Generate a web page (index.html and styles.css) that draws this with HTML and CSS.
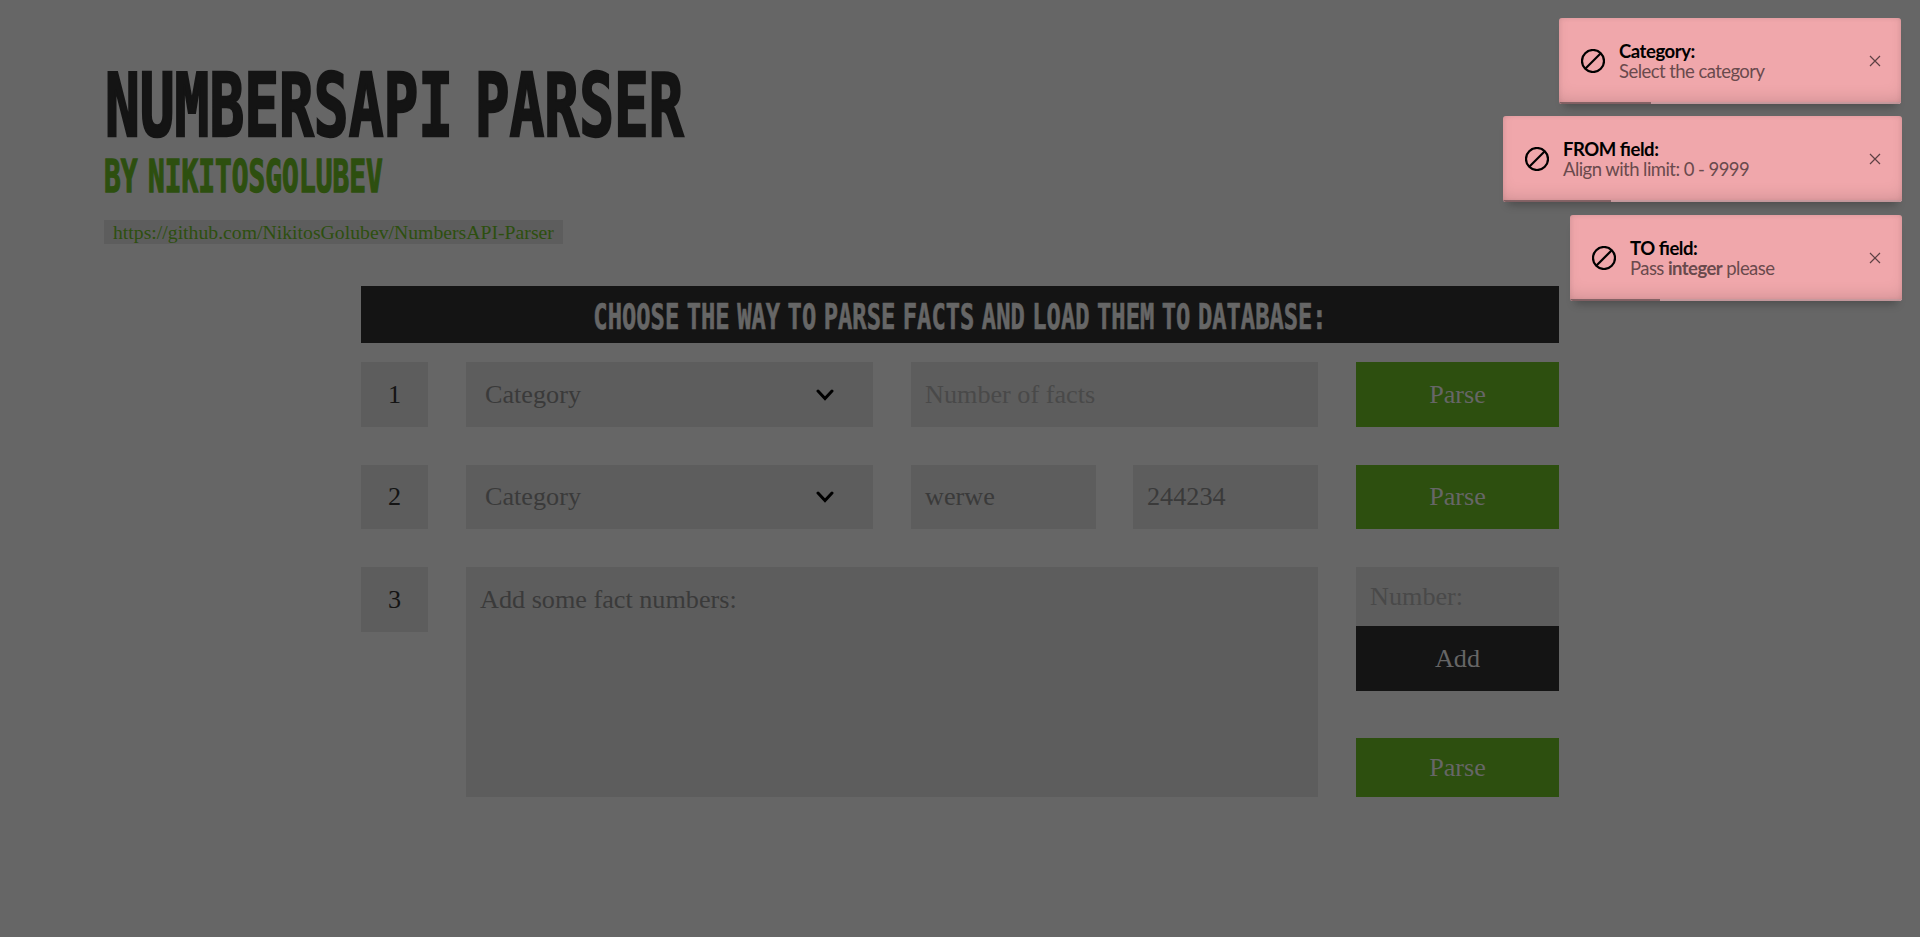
FILE: index.html
```html
<!DOCTYPE html>
<html lang="en">
<head>
<meta charset="utf-8">
<title>NumbersAPI Parser</title>
<link rel="stylesheet" href="styles.css">
</head>
<body>
<header class="intro">
  <h1 class="title"><span>NUMBERSAPI PARSER</span></h1>
  <h2 class="author"><span>BY NIKITOSGOLUBEV</span></h2>
  <a class="repo">https://github.com/NikitosGolubev/NumbersAPI-Parser</a>
</header>
<main class="panel">
  <div class="heading"><span>CHOOSE THE WAY TO PARSE FACTS AND LOAD THEM TO DATABASE:</span></div>
  <section class="row row-first">
    <div class="box num">1</div>
    <div class="box select">Category<svg class="chevron" viewBox="0 0 18 12"><path d="M2 2l7 7.5L16 2"/></svg></div>
    <div class="box field hint">Number of facts</div>
    <div class="box btn">Parse</div>
  </section>
  <section class="row row-second">
    <div class="box num">2</div>
    <div class="box select">Category<svg class="chevron" viewBox="0 0 18 12"><path d="M2 2l7 7.5L16 2"/></svg></div>
    <div class="range"><div class="box field">werwe</div><div class="box field">244234</div></div>
    <div class="box btn">Parse</div>
  </section>
  <section class="row row-third">
    <div class="box num">3</div>
    <div class="box area">Add some fact numbers:</div>
    <div class="side">
      <div class="box field hint">Number:</div>
      <div class="box btn add">Add</div>
      <div class="box btn last">Parse</div>
    </div>
  </section>
</main>
<aside class="toasts">
  <div class="toast toast-category">
    <svg class="ban" viewBox="0 0 24 24"><circle cx="12" cy="12" r="11"/><path d="M4.5 19.5l15-15"/></svg>
    <div class="msg"><strong class="head">Category:</strong><p>Select the category</p></div>
    <svg class="close" viewBox="0 0 12 12"><path d="M1 1l10 10M11 1L1 11"/></svg>
    <div class="progress"><i style="width:27%"></i></div>
  </div>
  <div class="toast toast-from">
    <svg class="ban" viewBox="0 0 24 24"><circle cx="12" cy="12" r="11"/><path d="M4.5 19.5l15-15"/></svg>
    <div class="msg"><strong class="head">FROM field:</strong><p>Align with limit: 0 - 9999</p></div>
    <svg class="close" viewBox="0 0 12 12"><path d="M1 1l10 10M11 1L1 11"/></svg>
    <div class="progress"><i style="width:27%"></i></div>
  </div>
  <div class="toast toast-to">
    <svg class="ban" viewBox="0 0 24 24"><circle cx="12" cy="12" r="11"/><path d="M4.5 19.5l15-15"/></svg>
    <div class="msg"><strong class="head">TO field:</strong><p>Pass <b>integer</b> please</p></div>
    <svg class="close" viewBox="0 0 12 12"><path d="M1 1l10 10M11 1L1 11"/></svg>
    <div class="progress"><i style="width:27%"></i></div>
  </div>
</aside>
</body>
</html>
```
FILE: styles.css
```css
* { box-sizing: border-box; margin: 0; padding: 0; }
body {
  height: 937px;
  overflow: hidden;
  background: #666;
  color: #3a3a3a;
  font: 26.2px/1.15 "Liberation Serif", serif;
}
.intro { padding: 61px 0 0 104px; height: 286px; }
.title, .author, .heading {
  font-family: "DejaVu Sans Mono", monospace;
  font-weight: bold;
  white-space: nowrap;
}
.title span, .author span, .heading span { display: inline-block; }
.title { height: 92px; padding-left: 1px; font-size: 88px; line-height: 89px; color: #141414; }
.title span {
  transform: scaleX(.657);
  transform-origin: 0 50%;
  word-spacing: -20px;
  -webkit-text-stroke: 2.5px #141414;
}
.author { height: 67px; font-size: 44px; line-height: 48px; color: #2d4f0f; }
.author span {
  transform: scaleX(.633);
  transform-origin: 0 50%;
  word-spacing: -10px;
  -webkit-text-stroke: 1.4px #2d4f0f;
}
.repo {
  display: inline-block;
  height: 24px;
  padding: 0 9px;
  background: #5d5d5d;
  color: #2d4f0f;
  font-size: 19.73px;
  line-height: 24px;
  vertical-align: top;
}
.panel { width: 1198px; margin-left: 361px; }
.heading {
  display: flex;
  justify-content: center;
  height: 57px;
  background: #141414;
  color: #666;
  font-size: 35px;
  line-height: 62px;
}
.heading span { transform: scaleX(.679); word-spacing: -10px; -webkit-text-stroke: .7px #666; }
.row {
  display: grid;
  grid-template-columns: 67px 407px 407px 203px;
  column-gap: 38px;
}
.row-first { margin-top: 19px; height: 65px; }
.row-second { margin-top: 38px; height: 64px; }
.row-third { margin-top: 38px; height: 230px; grid-template-columns: 67px 852px 203px; }
.box { display: flex; align-items: center; background: #5d5d5d; }
.row-first .box, .side .box, .row-third .num { padding-top: 2px; }
.num { justify-content: center; color: #141414; }
.row-third .num { height: 65px; }
.select { justify-content: space-between; padding: 0 39px 0 19px; }
.chevron { width: 18px; height: 12px; fill: none; stroke: #000; stroke-width: 3; stroke-linecap: round; }
.row-first .chevron { margin-top: -2px; }
.field { padding-left: 14px; }
.hint { color: #494949; }
.range { display: grid; grid-template-columns: 185px 185px; column-gap: 37px; }
.btn { justify-content: center; background: #2d4f0f; color: #666; }
.area { align-items: flex-start; padding: 18px 14px; }
.side { display: flex; flex-direction: column; }
.side .field, .side .last { height: 59px; }
.side .add { height: 65px; background: #141414; }
.side .last { margin-top: 47px; }
.toasts {
  position: absolute;
  top: 18px;
  right: 18px;
  display: flex;
  flex-direction: column;
  align-items: flex-end;
  font-family: Lato, sans-serif;
}
.toast {
  position: relative;
  display: flex;
  align-items: center;
  height: 86px;
  padding: 0 21px 0 22px;
  overflow: hidden;
  border-radius: 3px;
  background: #f0a7ab;
  box-shadow: 0 8px 8px -5px rgba(0,0,0,.25);
}
.toast::after {
  content: "";
  position: absolute;
  inset: 0;
  border-radius: 3px;
  box-shadow: inset 0 -10px 20px -10px rgba(0,0,0,.2), inset 0 0 5px rgba(0,0,0,.1);
}
.toast-category { width: 342px; margin-right: 1px; }
.toast-from { width: 399px; margin-top: 12px; }
.toast-to { width: 332px; margin-top: 13px; }
.ban { width: 24px; height: 24px; fill: none; stroke: #000; stroke-width: 2.2; }
.msg {
  flex: 1;
  margin-left: 14px;
  font-size: 18.5px;
  line-height: 20px;
  letter-spacing: -.56px;
  font-feature-settings: "liga" 1;
  color: #6a4a4d;
}
.head { display: block; color: #000; font-weight: 700; letter-spacing: -.45px; }
.msg b { font-weight: 700; }
.close { width: 12px; height: 12px; fill: none; stroke: #5d4144; stroke-width: 1.2; }
.toast-category .close { margin-right: -1px; }
.progress { position: absolute; left: 0; right: 0; bottom: 0; height: 2px; background: #e0adb1; }
.progress i { display: block; height: 2px; background: #967073; }
```
